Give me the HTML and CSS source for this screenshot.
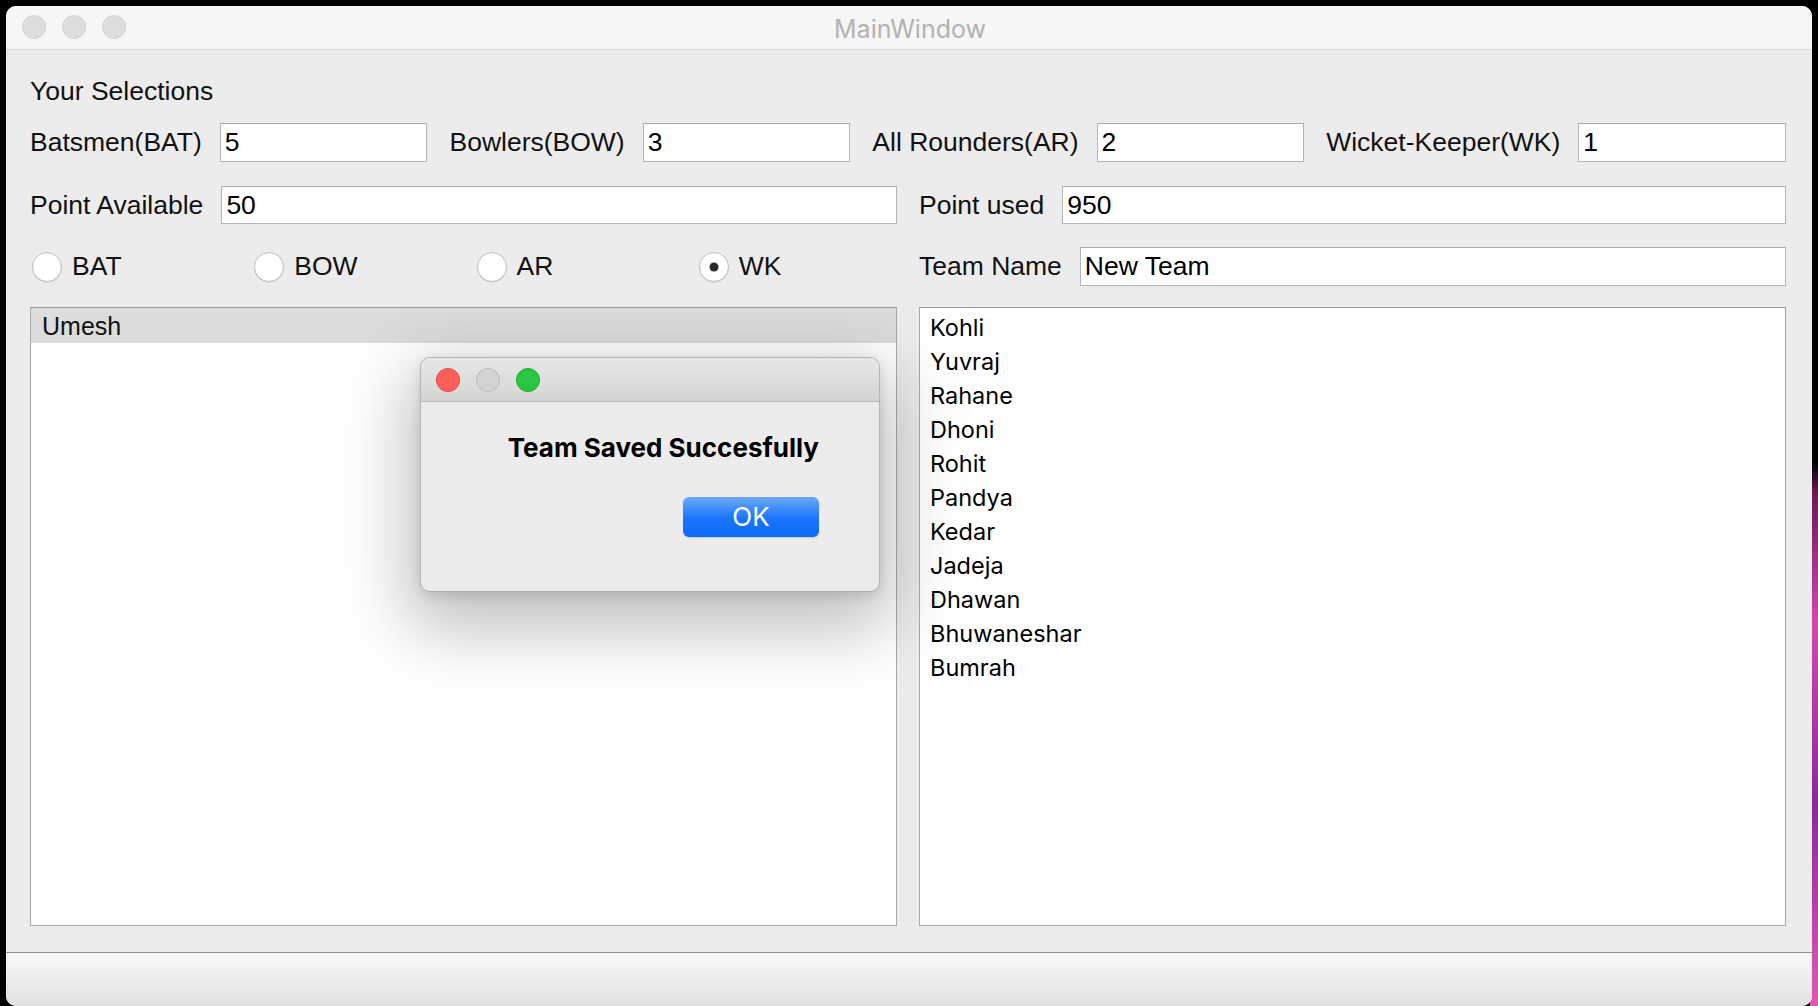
FILE: index.html
```html
<!DOCTYPE html>
<html lang="en">
<head>
<meta charset="utf-8">
<title>MainWindow</title>
<link rel="stylesheet" href="styles.css">
</head>
<body>
<div class="window">
  <div class="titlebar">
    <div class="lights">
      <span class="light"></span><span class="light"></span><span class="light"></span>
    </div>
    <div class="title">MainWindow</div>
  </div>
  <div class="main">
    <div class="heading">Your Selections</div>
    <div class="row counts">
      <label class="lbl">Batsmen(BAT)</label><div class="field">5</div>
      <label class="lbl">Bowlers(BOW)</label><div class="field">3</div>
      <label class="lbl">All Rounders(AR)</label><div class="field">2</div>
      <label class="lbl">Wicket-Keeper(WK)</label><div class="field">1</div>
    </div>
    <div class="grid">
      <div class="row pair r2"><label class="lbl">Point Available</label><div class="field">50</div></div>
      <div class="row pair r2"><label class="lbl">Point used</label><div class="field">950</div></div>
      <div class="radios r3">
        <div class="radio"><span class="circle"></span><span class="rlbl">BAT</span></div>
        <div class="radio"><span class="circle"></span><span class="rlbl">BOW</span></div>
        <div class="radio"><span class="circle"></span><span class="rlbl">AR</span></div>
        <div class="radio"><span class="circle checked"></span><span class="rlbl">WK</span></div>
      </div>
      <div class="row pair r3"><label class="lbl">Team Name</label><div class="field">New Team</div></div>
      <div class="list left">
        <div class="list-head">Umesh</div>
      </div>
      <div class="list right">
        <div class="item">Kohli</div>
        <div class="item">Yuvraj</div>
        <div class="item">Rahane</div>
        <div class="item">Dhoni</div>
        <div class="item">Rohit</div>
        <div class="item">Pandya</div>
        <div class="item">Kedar</div>
        <div class="item">Jadeja</div>
        <div class="item">Dhawan</div>
        <div class="item">Bhuwaneshar</div>
        <div class="item">Bumrah</div>
      </div>
    </div>
  </div>
  <div class="statusbar"></div>
</div>

<div class="dialog">
  <div class="dlg-titlebar">
    <span class="dl red"></span><span class="dl gray"></span><span class="dl green"></span>
  </div>
  <div class="dlg-body">
    <div class="dlg-text">Team Saved Succesfully</div>
    <div class="dlg-buttons"><button class="ok">OK</button></div>
  </div>
</div>
</body>
</html>
```

FILE: styles.css
```css
html {
  background-color: #000;
  background-image: linear-gradient(to bottom, #000 0%, #000 46%, #6a1a5a 49%, #d24aa8 62%, #8a2a9a 80%, #e05ab0 100%);
  background-size: 8px 100%;
  background-position: right top;
  background-repeat: no-repeat;
  height: 100%;
}
body {
  margin: 0;
  padding: 6px 6px 0 6px;
  font-family: "Liberation Sans", Arial, sans-serif;
  color: #111;
  height: 1006px;
  box-sizing: border-box;
  overflow: hidden;
}
.window {
  width: 1806px;
  height: 1000px;
  background: #ececec;
  border-radius: 10px;
  overflow: hidden;
  display: flex;
  flex-direction: column;
}
.titlebar {
  height: 43px;
  flex: none;
  background: #f6f6f6;
  border-bottom: 1px solid #d9d9d9;
  display: flex;
  align-items: center;
  position: relative;
}
.lights {
  display: flex;
  gap: 16px;
  padding-left: 16px;
  margin-top: -1px;
}
.light {
  width: 22px;
  height: 22px;
  border-radius: 50%;
  background: #dddddd;
  border: 1px solid #d0d0d0;
}
.title {
  position: absolute;
  left: 0;
  right: 0;
  text-align: center;
  font-family: "Inter", "Liberation Sans", sans-serif;
  font-size: 25px;
  color: #b2b2b2;
  top: 7px;
  line-height: 32px;
  padding-left: 2px;
}
.main {
  flex: 1;
  padding: 23px 26px 0 24px;
  display: flex;
  flex-direction: column;
}
.heading {
  font-size: 26.5px;
  line-height: 36px;
  margin-bottom: 14px;
}
.row {
  display: flex;
  align-items: center;
}
.counts {
  height: 39px;
  margin-bottom: 24px;
}
.lbl {
  font-size: 26.5px;
  white-space: nowrap;
  margin-right: 18px;
}
.counts .field {
  flex: 1 1 0;
  margin-right: 22px;
}
.counts .field:last-child {
  margin-right: 0;
}
.field {
  background: #fff;
  border: 1px solid #b4b4b4;
  border-top-color: #a8a8a8;
  height: 100%;
  box-sizing: border-box;
  font-size: 26.5px;
  line-height: 37px;
  padding-left: 4px;
  color: #000;
}
.pair .field {
  flex: 1;
}
.grid {
  display: grid;
  grid-template-columns: 1fr 1fr;
  grid-template-rows: 38px 23px 39px 21px 619px;
  column-gap: 22px;
}
.r2 { height: 38px; }
.r3 { height: 39px; }
.grid > .r2 { grid-row: 1; }
.grid > .r3 { grid-row: 3; }
.grid > .list { grid-row: 5; }
.radios {
  display: grid;
  grid-template-columns: repeat(4, 1fr);
  column-gap: 22px;
  align-items: center;
}
.radio {
  display: flex;
  align-items: center;
  padding-left: 2px;
}
.circle {
  width: 30px;
  height: 30px;
  box-sizing: border-box;
  border-radius: 50%;
  background: #fff;
  border: 1px solid #bdbdbd;
  box-shadow: 0 1px 1px rgba(0,0,0,0.08);
  position: relative;
  margin-right: 10px;
  flex: none;
}
.circle.checked::after {
  content: "";
  position: absolute;
  width: 9px;
  height: 9px;
  border-radius: 50%;
  background: #2b2b2b;
  left: 50%;
  top: 50%;
  transform: translate(-50%, -50%);
}
.rlbl {
  font-size: 26.5px;
}
.list {
  background: #fff;
  border: 1px solid #a9a9a9;
  border-top-color: #9a9a9a;
  box-sizing: border-box;
}
.list-head {
  background: #dcdcdc;
  height: 35px;
  line-height: 36px;
  font-size: 25px;
  padding-left: 11px;
}
.list.right {
  padding-top: 3px;
}
.item {
  font-family: "Inter", "Liberation Sans", sans-serif;
  font-size: 23.5px;
  height: 34px;
  line-height: 34px;
  padding-left: 10px;
  color: #000;
}
.statusbar {
  flex: none;
  height: 53px;
  border-top: 1px solid #8e8e8e;
  background: linear-gradient(to bottom, #f8f8f8, #e2e2e2);
}

/* modal dialog */
.dialog {
  position: absolute;
  left: 420px;
  top: 357px;
  width: 460px;
  height: 235px;
  box-sizing: border-box;
  background: #ececec;
  border: 1px solid #b3b3b3;
  border-radius: 10px;
  box-shadow: 0 24px 70px 12px rgba(0,0,0,0.26), 0 4px 12px rgba(0,0,0,0.12);
  overflow: hidden;
  font-family: "Inter", "Liberation Sans", sans-serif;
}
.dlg-titlebar {
  height: 43px;
  background: linear-gradient(to bottom, #e8e8e8, #d3d3d3);
  border-bottom: 1px solid #b9b9b9;
  display: flex;
  align-items: center;
  gap: 16px;
  padding-left: 15px;
}
.dl {
  width: 24px;
  height: 24px;
  border-radius: 50%;
  box-sizing: border-box;
  margin-top: 1px;
}
.dl.red { background: #fe5f57; border: 1px solid #e2463f; }
.dl.gray { background: #d3d3d3; border: 1px solid #bdbdbd; }
.dl.green { background: #28c840; border: 1px solid #1aab29; }
.dlg-body {
  padding: 31px 60px 0 80px;
}
.dlg-text {
  font-weight: 700;
  font-size: 26px;
  line-height: 30px;
  color: #000;
  text-align: right;
}
.dlg-buttons {
  display: flex;
  justify-content: flex-end;
  margin-top: 34px;
}
.ok {
  width: 136px;
  height: 40px;
  border: none;
  border-radius: 6px;
  background: linear-gradient(to bottom, #6aa8ff, #1a74fb 55%, #0a6bfb);
  box-shadow: 0 1px 1px rgba(0,0,0,0.15);
  color: #fff;
  font-family: "Inter", "Liberation Sans", sans-serif;
  font-size: 26px;
  line-height: 40px;
  padding: 0;
}
```
